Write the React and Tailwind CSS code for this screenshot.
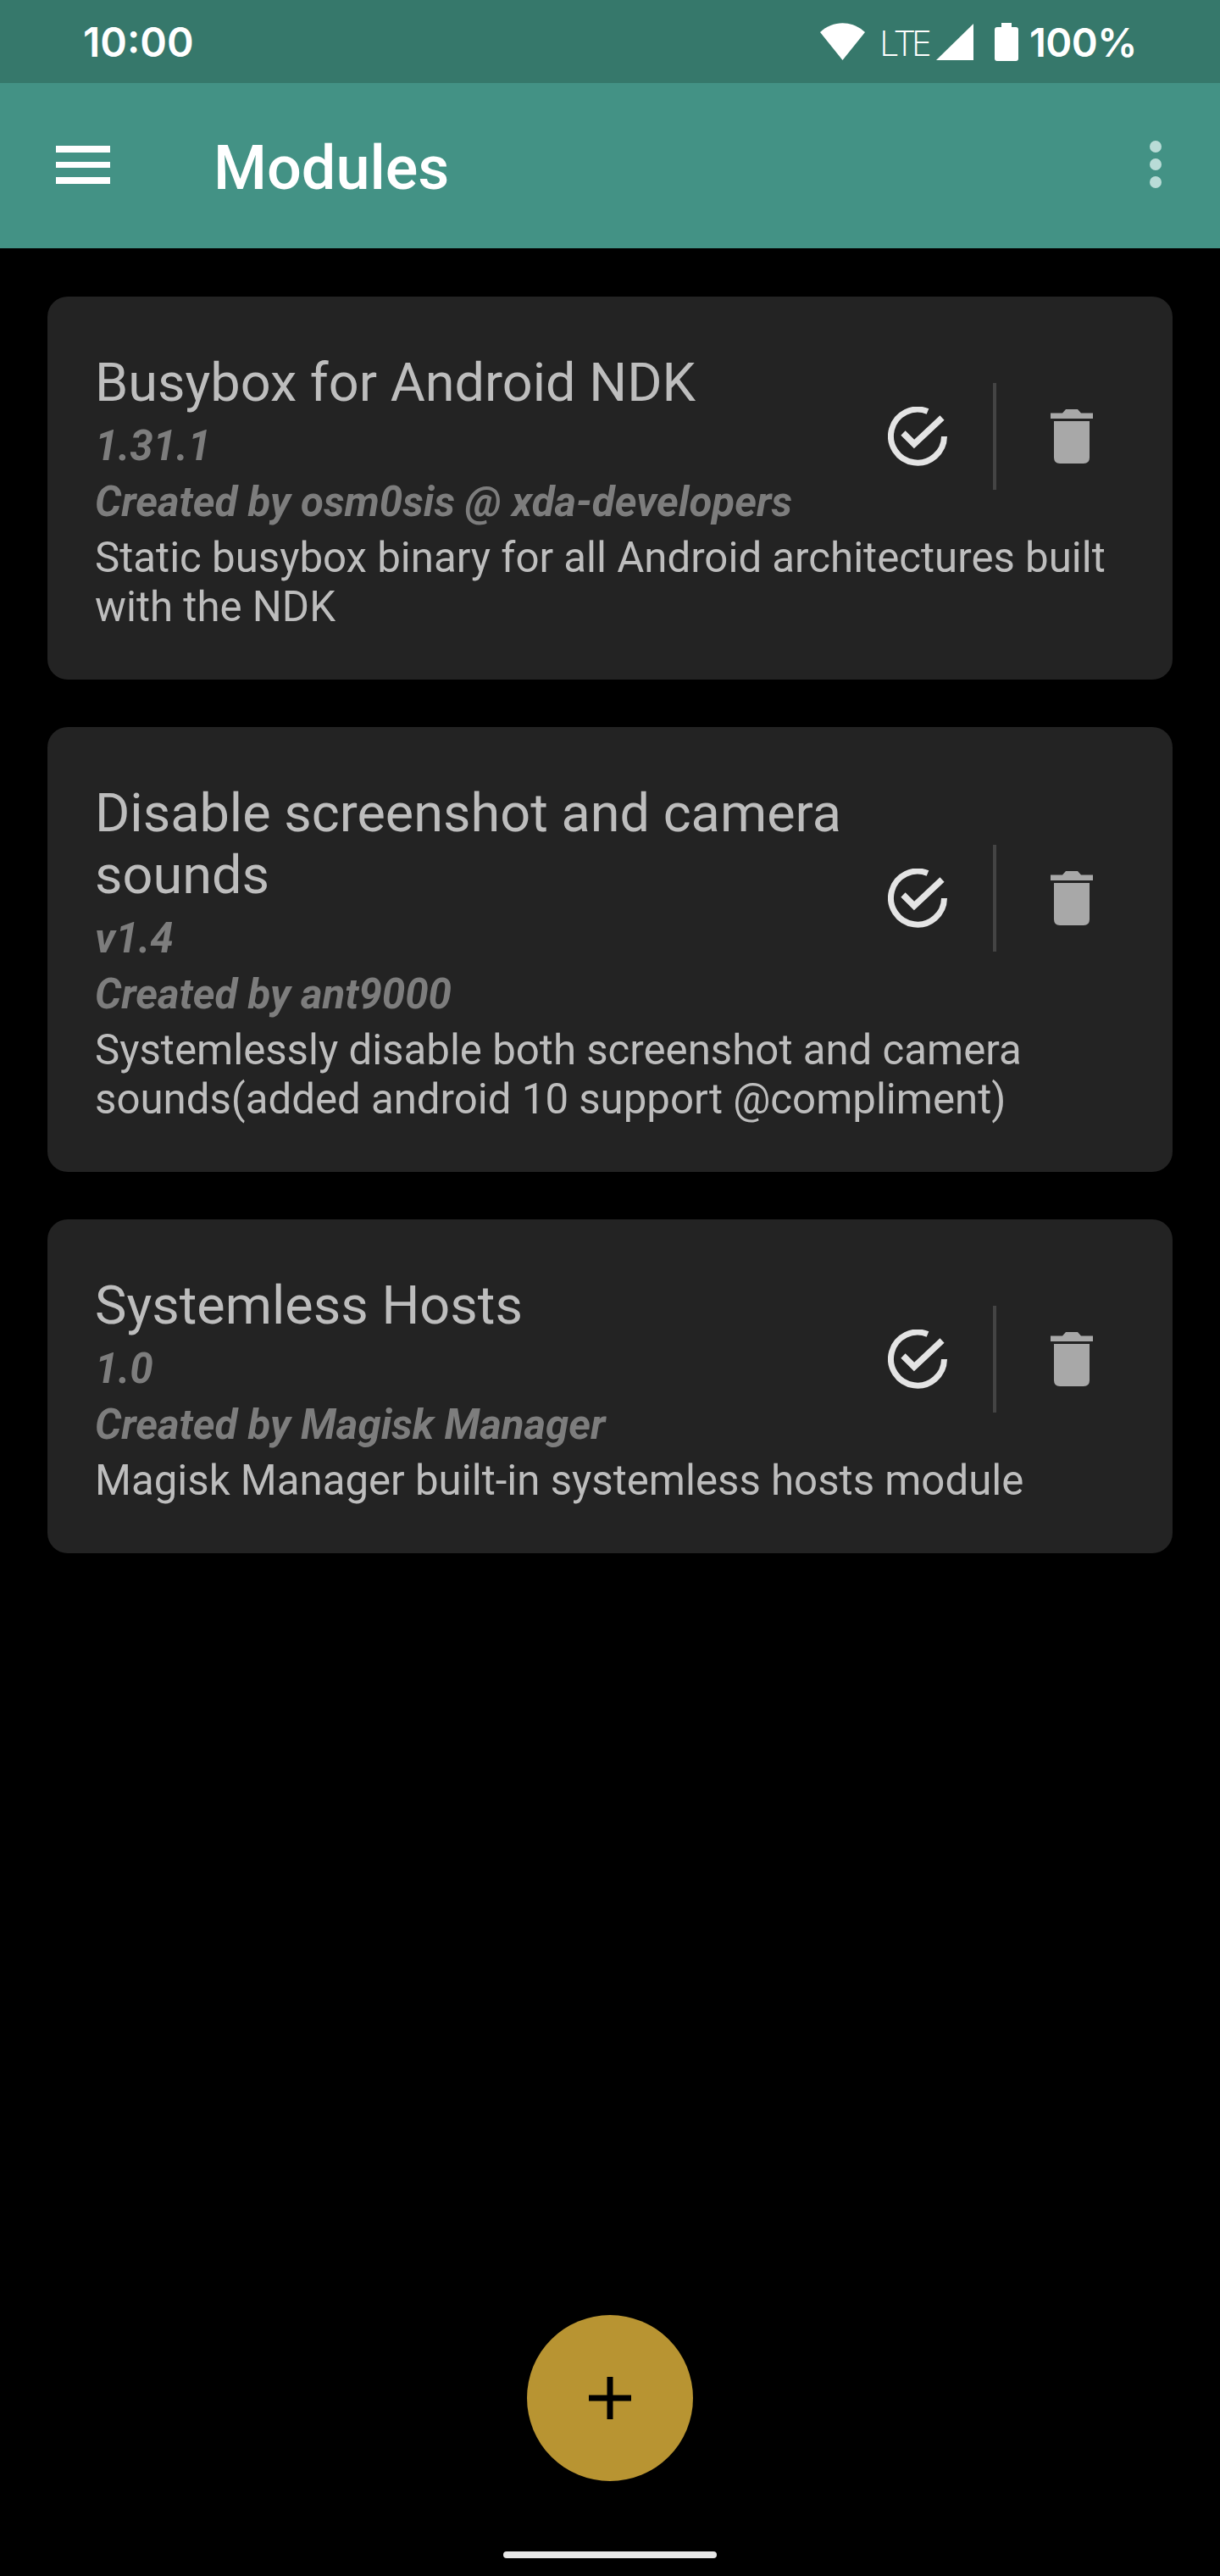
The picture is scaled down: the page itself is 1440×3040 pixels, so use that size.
const roboto = { fontFamily: "Roboto, sans-serif" };

function CheckIcon() {
  return (
    <svg viewBox="0 0 70 70" className="w-[70px] h-[70px] shrink-0" fill="none" stroke="#e4e4e4" strokeWidth="7">
      <path d="M47 5.5A31.5 31.5 0 1 0 66.5 35" />
      <path d="M18 31L31 44L64 13" strokeWidth="7.5" />
    </svg>
  );
}

function TrashIcon() {
  return (
    <svg viewBox="0 0 50 64" className="w-[50px] h-[64px] shrink-0" fill="#a8a8a8">
      <path d="M0 4.5H14L18 0H32L36 4.5H50V11H0Z" />
      <path d="M4 14H46V57Q46 64 39 64H11Q4 64 4 57Z" />
    </svg>
  );
}

function ModuleCard({ title, version, author, desc }) {
  return (
    <div className="bg-[#232323] rounded-[24px] pl-[56px] pr-[56px] pt-[65px] pb-[57px]" style={roboto}>
      <div className="flex items-center">
        <div className="flex-1 min-w-0">
          <div className="text-[63px] leading-[73px] text-[#bdbdbd] pr-[20px]">{title}</div>
          <div className="mt-[5px] text-[49.2px] leading-[66px] italic font-bold text-[#7d7d7d]">{version}</div>
          <div className="text-[49.2px] leading-[66px] italic font-bold text-[#7d7d7d]">{author}</div>
        </div>
        <div className="flex items-center shrink-0 mb-[10px] pl-[8px] pr-[38px]">
          <CheckIcon />
          <div className="w-[4px] h-[126px] bg-[#444444] ml-[54px] mr-[64px]" />
          <TrashIcon />
        </div>
      </div>
      <div className="mt-[4px] text-[49.2px] leading-[58px] text-[#bdbdbd]">{desc}</div>
    </div>
  );
}

export default function App() {
  return (
    <div className="relative w-[1440px] h-[3040px] bg-black overflow-hidden">
      <div className="h-[98px] bg-[#36786b] flex items-center justify-between pl-[98px] pr-[98px] text-white">
        <span className="text-[48px] font-semibold leading-none mt-[2px]" style={{ fontFamily: "Inter, sans-serif" }}>10:00</span>
        <div className="flex items-center">
          <svg viewBox="0 0 53 44" className="w-[53px] h-[44px]" fill="#fff">
            <path d="M0 11C15 -3.5 38 -3.5 53 11L26.5 44Z" />
          </svg>
          <span className="ml-[17px] text-[43px] leading-none font-light tracking-[-3.5px]" style={{ fontFamily: "'Open Sans', sans-serif" }}>LTE</span>
          <svg viewBox="0 0 44 43" className="ml-[9px] w-[44px] h-[43px]" fill="#fff">
            <path d="M44 0V43H0Z" />
          </svg>
          <svg viewBox="0 0 28 45" className="ml-[25px] w-[28px] h-[45px]" fill="#fff">
            <path d="M8 0H20V5H25Q28 5 28 8V42Q28 45 25 45H3Q0 45 0 42V8Q0 5 3 5H8Z" />
          </svg>
          <span className="ml-[13px] text-[47px] font-semibold leading-none tracking-[-0.5px]" style={{ fontFamily: "Inter, sans-serif" }}>100%</span>
        </div>
      </div>
      <div className="h-[195px] bg-[#439285] flex items-center pl-[66px] pr-[69px] text-white">
        <div className="flex flex-col gap-[11px] w-[64px] shrink-0 mb-[3px]">
          <div className="h-[8px] bg-white" />
          <div className="h-[7px] bg-white" />
          <div className="h-[8px] bg-white" />
        </div>
        <span className="ml-[122px] flex-1 text-[72px] font-medium leading-none mt-[7px]" style={roboto}>Modules</span>
        <div className="flex flex-col gap-[7px] mb-[3px]">
          <div className="w-[14px] h-[14px] rounded-full bg-[#b9dcd7]" />
          <div className="w-[14px] h-[14px] rounded-full bg-[#b9dcd7]" />
          <div className="w-[14px] h-[14px] rounded-full bg-[#b9dcd7]" />
        </div>
      </div>
      <div className="flex flex-col gap-[56px] px-[56px] pt-[57px]">
        <ModuleCard
          title="Busybox for Android NDK"
          version="1.31.1"
          author="Created by osm0sis @ xda-developers"
          desc={<>Static busybox binary for all Android architectures built<br />with the NDK</>}
        />
        <ModuleCard
          title="Disable screenshot and camera sounds"
          version="v1.4"
          author="Created by ant9000"
          desc={<>Systemlessly disable both screenshot and camera<br />sounds(added android 10 support @compliment)</>}
        />
        <ModuleCard
          title="Systemless Hosts"
          version="1.0"
          author="Created by Magisk Manager"
          desc="Magisk Manager built-in systemless hosts module"
        />
      </div>
      <div className="absolute left-[622px] top-[2732px] w-[196px] h-[196px] rounded-full bg-[#b89432] flex items-center justify-center">
        <svg viewBox="0 0 50 50" className="w-[50px] h-[50px]" fill="#000">
          <path d="M21.5 0H28.5V21.5H50V28.5H28.5V50H21.5V28.5H0V21.5H21.5Z" />
        </svg>
      </div>
      <div className="absolute left-[594px] top-[3011px] w-[252px] h-[8px] rounded-full bg-[#e8e8e8]" />
    </div>
  );
}
